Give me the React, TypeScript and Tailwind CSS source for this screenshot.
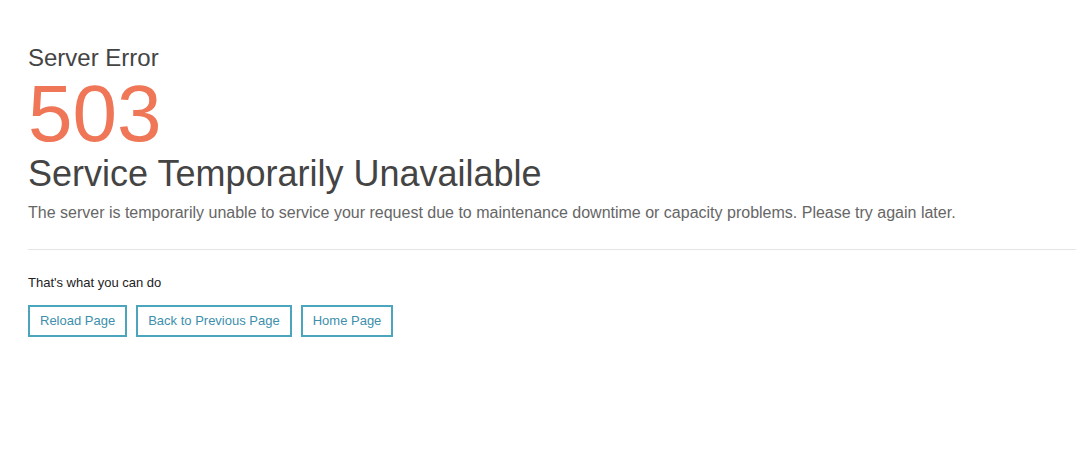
export default function App() {
  return (
    <div className="w-[1076px] h-[450px] bg-white pl-[28px] pt-[44px]" style={{ fontFamily: '"Liberation Sans", Arial, sans-serif' }}>
      <div className="text-[24px] leading-[28px] text-[#444]">Server Error</div>
      <div className="text-[80px] leading-[80px] text-[#ef7656] mt-[2px]">503</div>
      <div className="text-[36px] leading-[40px] text-[#444]">Service Temporarily Unavailable</div>
      <p className="text-[16px] leading-[22px] text-[#666] mt-[8px]">
        The server is temporarily unable to service your request due to maintenance downtime or capacity problems. Please try again later.
      </p>
      <div className="h-px bg-[#e5e5e5] mt-[25px]" />
      <div className="text-[13px] leading-[16px] text-[#222] mt-[25px]">That's what you can do</div>
      <div className="flex gap-[9px] mt-[14px]">
        <button className="h-[32px] px-[10px] border-2 border-[#4ba5bd] text-[13px] text-[#3d8fab]">Reload Page</button>
        <button className="h-[32px] px-[10px] border-2 border-[#4ba5bd] text-[13px] text-[#3d8fab]">Back to Previous Page</button>
        <button className="h-[32px] px-[10px] border-2 border-[#4ba5bd] text-[13px] text-[#3d8fab]">Home Page</button>
      </div>
    </div>
  );
}
